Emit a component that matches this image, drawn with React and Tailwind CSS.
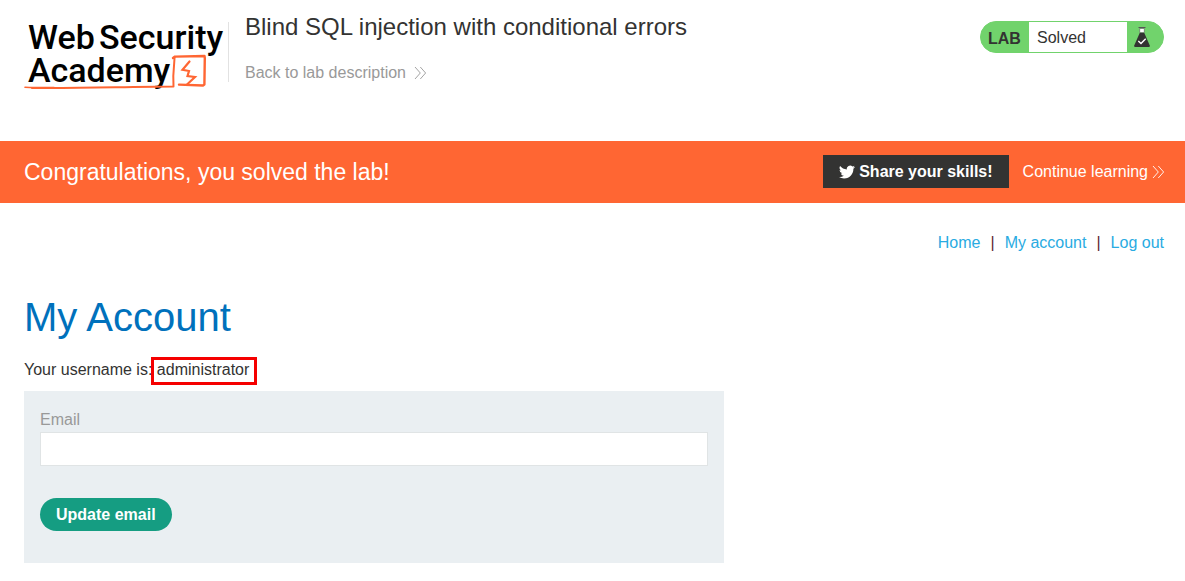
import React from 'react';

function Logo() {
  return (
    <svg
      className="h-18 w-50 shrink-0 overflow-visible"
      viewBox="0 0 200 72"
      role="img"
      aria-label="Web Security Academy"
    >
      <g fontFamily="Roboto, 'Liberation Sans', sans-serif" fontSize="34" fontWeight="500" fill="#000">
        <text x="4" y="29">Web</text>
        <text x="75" y="29">Security</text>
        <text x="4" y="62">Academy</text>
      </g>
      <g fill="none" stroke="#ff6633" strokeLinejoin="round" strokeLinecap="round">
        <path strokeWidth="1.6" d="M1 67.2 C12 68.2 18 67 30 67.6" />
        <path strokeWidth="2" d="M8 68 C60 68.6 100 66.6 149.500 66.4 L149.300 56 L150.600 37" />
        <path strokeWidth="2.400" d="M149 38 L151 36.600 L180.500 36 L180.800 38 L180.400 64.500 L179 65.500 L155 64.600" />
        <path strokeWidth="2.200" strokeLinejoin="miter" d="M165.500 41.500 L158.500 49.800 L165 51 L163.500 56 L171 57 L163 64.500" />
      </g>
    </svg>
  );
}

function DoubleChevron() {
  return (
    <svg className="h-4 w-3 shrink-0" viewBox="0 0 12 16" fill="none" stroke="currentColor" aria-hidden="true">
      <path strokeWidth=".9" d="M1 2 L6.300 8 L1 14 M6.300 2 L11.600 8 L6.300 14" />
    </svg>
  );
}

function Flask() {
  return (
    <svg className="h-6 w-4" viewBox="0 0 16 24" role="img" aria-label="Solved">
      <path fill="#333332" d="M5.700 8 H10.300 L15.800 20.500 Q16.200 22 14.800 22 H1.200 Q-0.200 22 0.200 20.500 Z" />
      <path fill="#fff" stroke="#555" strokeWidth=".6" d="M5.700 3.500 H10.300 V7.500 H5.700 Z" />
      <path stroke="#555" strokeWidth="1" d="M4.500 2.500 H11.500" />
      <path fill="none" stroke="#fff" strokeWidth="1.400" d="M4.300 16 L7 18.500 L11.700 13.700" />
    </svg>
  );
}

function Bird() {
  return (
    <svg className="h-4 w-4" viewBox="0 0 24 24" fill="#fff" aria-hidden="true">
      <path d="M23.950 4.570a10 10 0 0 1-2.820.770 4.960 4.960 0 0 0 2.160-2.720c-.950.550-2.010.950-3.130 1.180a4.920 4.920 0 0 0-8.380 4.480C7.690 8.100 4.070 6.130 1.640 3.160a4.920 4.920 0 0 0 1.520 6.570 4.900 4.900 0 0 1-2.230-.610v.060a4.920 4.920 0 0 0 3.950 4.830 5 5 0 0 1-2.210.080 4.940 4.940 0 0 0 4.600 3.420A9.870 9.870 0 0 1 0 19.540a13.990 13.990 0 0 0 7.550 2.210c9.050 0 14-7.500 14-13.980 0-.210 0-.420-.020-.630a9.940 9.940 0 0 0 2.460-2.550z" />
    </svg>
  );
}

export default function App() {
  return (
    <div className="bg-white font-['Liberation_Sans',Arial,sans-serif] text-base leading-6 text-[#333332]">
      <header className="flex items-start pt-5 pr-[21px] pb-[49px] pl-6">
        <Logo />
        <div className="mt-0.5 ml-1 h-15 border-l border-[#e2e2e2]" />
        <div className="-mt-[9px] ml-4 flex-1">
          <h2 className="text-2xl leading-8">Blind SQL injection with conditional errors</h2>
          <a href="#lab" className="mt-[18px] inline-flex items-center gap-2 text-[#999]">
            Back to lab description
            <DoubleChevron />
          </a>
        </div>
        <div className="mt-px flex h-8 w-46 items-stretch overflow-hidden rounded-full border border-[#71d36c] bg-[#71d36c]">
          <span className="w-12 pt-[5px] pl-[7px] font-bold">LAB</span>
          <p className="flex-1 bg-white pt-1 pl-2 leading-6">Solved</p>
          <span className="flex w-9 items-center pl-[7px]">
            <Flask />
          </span>
        </div>
      </header>

      <section className="flex h-[62px] items-center bg-[#ff6633] pr-[21px] pl-6 text-white">
        <h4 className="flex-1 text-[23px]">Congratulations, you solved the lab!</h4>
        <button type="button" className="mb-px flex h-[33px] items-center gap-1 bg-[#333332] px-4 pt-px font-bold">
          <Bird />
          Share your skills!
        </button>
        <a href="#learning" className="ml-3.5 flex items-center gap-1">
          Continue learning
          <DoubleChevron />
        </a>
      </section>

      <nav className="flex justify-end gap-2.5 pt-7 pr-[21px] text-[#29abe2]">
        <a href="#home">Home</a>
        <span className="text-[#5c1e2e]">|</span>
        <a href="#account">My account</a>
        <span className="text-[#5c1e2e]">|</span>
        <a href="#logout">Log out</a>
      </nav>

      <main className="px-6 pt-[37px] pb-4">
        <h1 className="text-[40px] leading-[50px] text-[#0071bc]">My Account</h1>
        <p className="mt-4">
          Your username is:{' '}
          <span className="relative">
            administrator
            <span className="absolute -top-1 -right-2 -bottom-[7px] -left-1.5 border-3 border-[#f50000]" />
          </span>
        </p>
        <form className="mt-[9px] max-w-[700px] bg-[#eaeff2] px-4 pt-[17px] pb-8" onSubmit={(e) => e.preventDefault()}>
          <label htmlFor="email" className="block text-[#999]">Email</label>
          <input
            id="email"
            type="email"
            className="block h-[34px] w-full border border-[#e0e4e5] bg-white px-2"
          />
          <button type="submit" className="mt-8 h-[33px] rounded-full bg-[#159d82] px-4 font-bold text-white">
            Update email
          </button>
        </form>
      </main>
    </div>
  );
}
